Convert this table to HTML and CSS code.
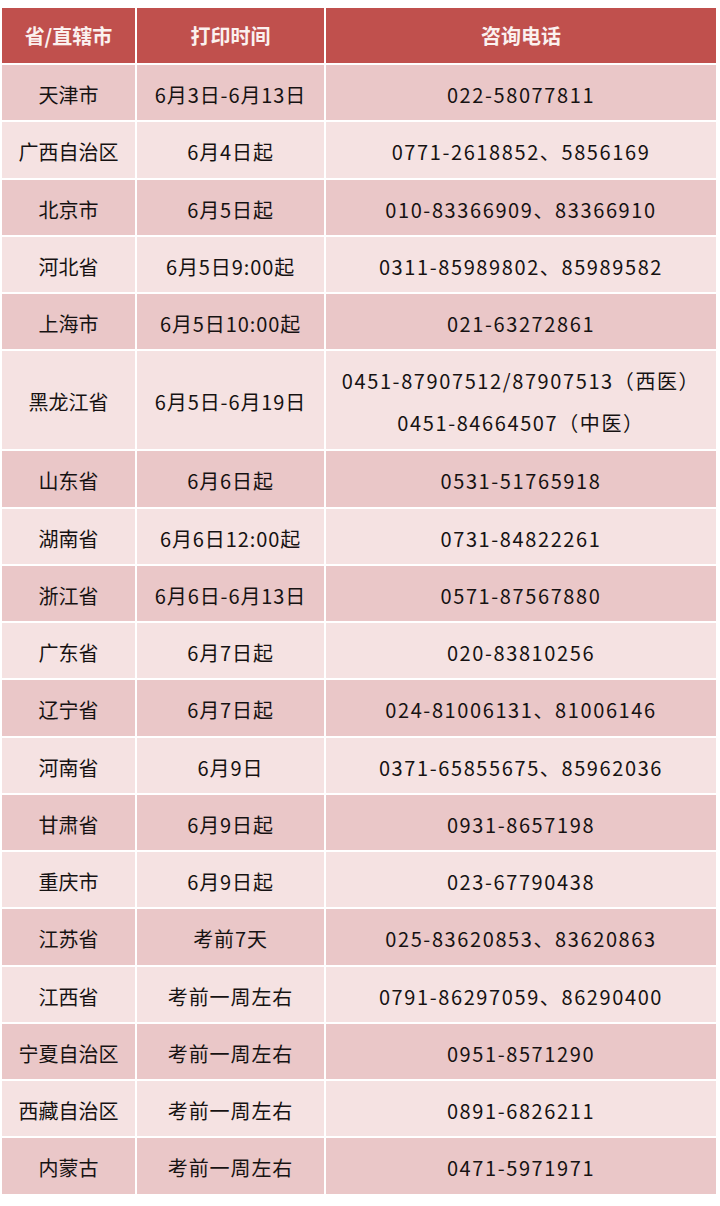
FILE: index.html
```html
<!DOCTYPE html>
<html lang="zh">
<head>
<meta charset="utf-8">
<link rel="stylesheet" href="styles.css">
</head>
<body>
<table class="tbl">
  <colgroup><col class="c1"><col class="c2"><col class="c3"></colgroup>
  <thead>
    <tr><th>省/直辖市</th><th>打印时间</th><th>咨询电话</th></tr>
  </thead>
  <tbody>
    <tr class="dk"><td>天津市</td><td>6月3日-6月13日</td><td>022-58077811</td></tr>
    <tr class="lt"><td>广西自治区</td><td>6月4日起</td><td>0771-2618852、5856169</td></tr>
    <tr class="dk"><td>北京市</td><td>6月5日起</td><td>010-83366909、83366910</td></tr>
    <tr class="lt"><td>河北省</td><td>6月5日9:00起</td><td>0311-85989802、85989582</td></tr>
    <tr class="dk"><td>上海市</td><td>6月5日10:00起</td><td>021-63272861</td></tr>
    <tr class="lt tall"><td>黑龙江省</td><td>6月5日-6月19日</td><td><div class="ln">0451-87907512/87907513（西医）</div><div class="ln">0451-84664507（中医）</div></td></tr>
    <tr class="dk"><td>山东省</td><td>6月6日起</td><td>0531-51765918</td></tr>
    <tr class="lt"><td>湖南省</td><td>6月6日12:00起</td><td>0731-84822261</td></tr>
    <tr class="dk"><td>浙江省</td><td>6月6日-6月13日</td><td>0571-87567880</td></tr>
    <tr class="lt"><td>广东省</td><td>6月7日起</td><td>020-83810256</td></tr>
    <tr class="dk"><td>辽宁省</td><td>6月7日起</td><td>024-81006131、81006146</td></tr>
    <tr class="lt"><td>河南省</td><td>6月9日</td><td>0371-65855675、85962036</td></tr>
    <tr class="dk"><td>甘肃省</td><td>6月9日起</td><td>0931-8657198</td></tr>
    <tr class="lt"><td>重庆市</td><td>6月9日起</td><td>023-67790438</td></tr>
    <tr class="dk"><td>江苏省</td><td>考前7天</td><td>025-83620853、83620863</td></tr>
    <tr class="lt"><td>江西省</td><td>考前一周左右</td><td>0791-86297059、86290400</td></tr>
    <tr class="dk"><td>宁夏自治区</td><td>考前一周左右</td><td>0951-8571290</td></tr>
    <tr class="lt"><td>西藏自治区</td><td>考前一周左右</td><td>0891-6826211</td></tr>
    <tr class="dk"><td>内蒙古</td><td>考前一周左右</td><td>0471-5971971</td></tr>
  </tbody>
</table>
</body>
</html>
```
FILE: styles.css
```css
html, body {
  margin: 0;
  padding: 0;
  background: #ffffff;
}
body {
  padding-top: 6px;
  font-family: "Noto Sans CJK SC", "Noto Sans", sans-serif;
  color: #161212;
}
.tbl {
  border-collapse: separate;
  border-spacing: 2px;
  width: 718px;
  table-layout: fixed;
}
.c1 { width: 133px; }
.c2 { width: 187px; }
.c3 { width: 390px; }
.tbl th {
  background: #c0504d;
  color: #fbf1ef;
  font-weight: 700;
  font-size: 20px;
  height: 55px;
  padding: 0;
  text-align: center;
  vertical-align: middle;
}
.tbl td {
  height: 55.25px;
  padding: 5px 0 0;
  box-sizing: border-box;
  font-size: 20px;
  line-height: 24px;
  text-align: center;
  vertical-align: middle;
  white-space: nowrap;
}
.tbl td:nth-child(2) { letter-spacing: 0.9px; }
.tbl td:nth-child(3) { letter-spacing: 1.6px; }
.dk td { background: #eac7c8; }
.lt td { background: #f5e2e2; }
.tall td { height: 98px; padding-top: 4px; }
.ln { line-height: 42px; }
```
